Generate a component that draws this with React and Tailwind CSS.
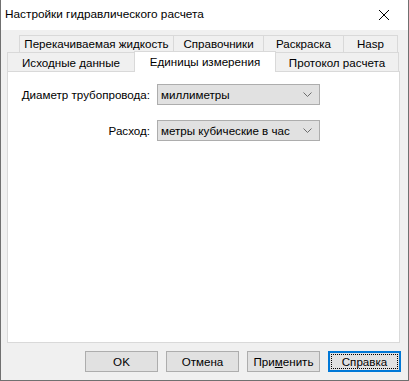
const FONT = { fontFamily: '"Liberation Sans", Arial, sans-serif' };

function Tab({ label, w, className = '' }) {
  return (
    <div
      className={`flex items-center justify-center border-t border-l border-r border-[#d9d9d9] bg-[#f0f0f0] text-[11.6px] text-black ${className}`}
      style={{ width: w }}
    >
      {label}
    </div>
  );
}

function Select({ value }) {
  return (
    <div className="flex h-[21px] w-[163px] items-center justify-between border border-[#adadad] bg-[#e1e1e1] pl-[3px] pr-[7px] text-[11.6px] text-black">
      <span>{value}</span>
      <svg viewBox="0 0 9 5" className="h-[5px] w-[9px]" fill="none" stroke="#6d6d6d" strokeWidth="1">
        <polyline points="0.5 0.5 4.5 4.5 8.5 0.5" />
      </svg>
    </div>
  );
}

function Button({ children, focused }) {
  if (focused) {
    return (
      <div className="flex h-[21px] w-[73px] items-center justify-center border-2 border-[#0078d7] bg-[#e1e1e1] p-px">
        <div className="flex h-full w-full items-center justify-center border border-dotted border-black text-[11.6px] text-black">
          {children}
        </div>
      </div>
    );
  }
  return (
    <div className="flex h-[21px] w-[73px] items-center justify-center border border-[#adadad] bg-[#e1e1e1] text-[11.6px] text-black">
      {children}
    </div>
  );
}

export default function App() {
  return (
    <div className="flex h-[381px] w-[409px] flex-col border-x border-b border-[#707070] bg-[#f0f0f0]" style={FONT}>
      {/* title bar */}
      <div className="flex h-[30px] items-center justify-between bg-white pl-[4px] pr-[19px]">
        <span className="text-[11.8px] text-black">Настройки гидравлического расчета</span>
        <svg viewBox="0 0 10 10" className="h-[10px] w-[10px]" fill="none" stroke="#000" strokeWidth="1">
          <line x1="0" y1="0" x2="10" y2="10" />
          <line x1="10" y1="0" x2="0" y2="10" />
        </svg>
      </div>

      <div className="flex flex-1 flex-col px-[6px] pt-[5px]">
        {/* tab rows */}
        <div className="flex h-[17px] pl-[12px]">
          <Tab label="Перекачиваемая жидкость" w={155} />
          <Tab label="Справочники" w={91} className="-ml-px" />
          <Tab label="Раскраска" w={81} className="-ml-px" />
          <Tab label="Hasp" w={55} className="-ml-px" />
        </div>
        <div className="relative z-10 flex h-[19px] items-end">
          <Tab label="Исходные данные" w={128} className="h-[19px] pt-[1px]" />
          <div
            className="-mb-px -ml-px -mt-[2px] flex h-[21px] items-center justify-center border-t border-l border-r border-[#d9d9d9] bg-white text-[11.6px] text-black"
            style={{ width: 142 }}
          >
            Единицы измерения
          </div>
          <Tab label="Протокол расчета" w={124} className="-ml-px h-[19px] pt-[2px]" />
        </div>

        {/* panel */}
        <div className="flex h-[272px] w-[393px] flex-col border border-[#d9d9d9] bg-white pt-[12px]">
          <div className="flex items-center">
            <span className="w-[142px] text-right text-[11.6px] text-black">Диаметр трубопровода:</span>
            <div className="ml-[7px]">
              <Select value="миллиметры" />
            </div>
          </div>
          <div className="mt-[15px] flex items-center">
            <span className="w-[142px] text-right text-[11.6px] text-black">Расход:</span>
            <div className="ml-[7px]">
              <Select value="метры кубические в час" />
            </div>
          </div>
        </div>

        {/* buttons */}
        <div className="mt-[8px] flex gap-[8px] pl-[78px]">
          <Button>OK</Button>
          <Button>Отмена</Button>
          <Button>
            При<span className="underline">м</span>енить
          </Button>
          <Button focused>Справка</Button>
        </div>
      </div>
    </div>
  );
}
